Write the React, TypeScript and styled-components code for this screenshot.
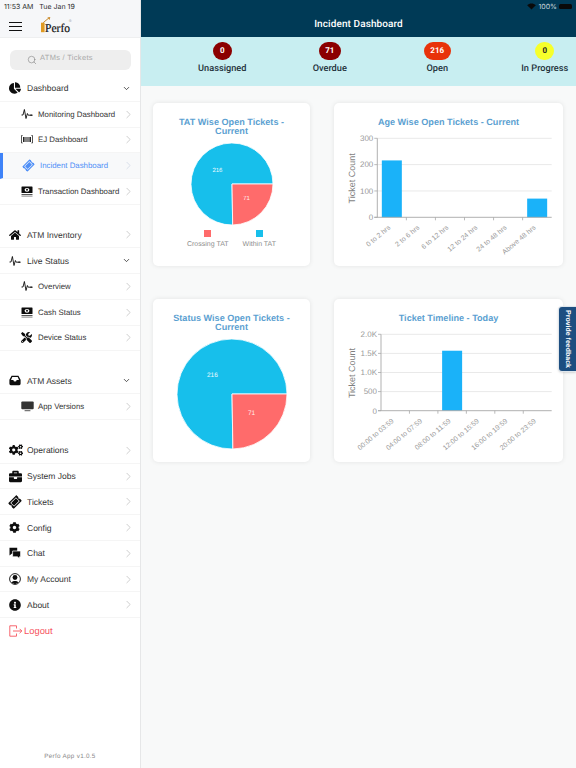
import React from 'react';
import styled, { createGlobalStyle } from 'styled-components';
import { ChevronRight, ChevronDown, Search } from 'lucide-react';
import { FaChartPie, FaHome, FaTools, FaCogs, FaBriefcase, FaTicketAlt, FaCog, FaInfoCircle } from 'react-icons/fa';

const Global = createGlobalStyle`
  html, body { margin: 0; padding: 0; background: #fff; }
  body { font-family: "Liberation Sans", Arial, sans-serif; text-rendering: geometricPrecision; }
  * { box-sizing: border-box; }
`;

const Shell = styled.div`
  position: relative;
  display: flex;
  width: 576px;
  height: 768px;
  overflow: hidden;
`;
const Sidebar = styled.aside`
  width: 141px;
  height: 768px;
  flex: none;
  display: flex;
  flex-direction: column;
  background: #fff;
  border-right: 1px solid #e6e7e8;
`;
const SideHeader = styled.header`
  height: 38px;
  flex: none;
  background: #f6f7f9;
  border-bottom: 1px solid #eeeff0;
  padding: 2px 0 0 4px;
`;
const Clock = styled.div`
  font-family: Inter, sans-serif;
  font-size: 7px;
  line-height: 9px;
  color: #2a2a2a;
  white-space: pre;
`;
const Brand = styled.div`
  display: flex;
  align-items: flex-start;
  margin: 4px 0 0 5px;
`;
const Burger = styled.div`
  width: 13px;
  margin-top: 7px;
  display: flex;
  flex-direction: column;
  gap: 2.6px;
  & > i { display: block; height: 1.2px; background: #111; }
`;
const LogoBox = styled.svg`
  display: block;
  margin-left: 18.5px;
  flex: none;
`;
const SearchBox = styled.div`
  height: 20px;
  margin: 12px 10px 6px 10px;
  padding: 0 0 0 17px;
  width: 121px;
  display: flex;
  align-items: center;
  gap: 3px;
  border-radius: 6px;
  background: #eeeeee;
  color: #a9a9a9;
  font-size: 7.5px;
  letter-spacing: 0.3px;
  & > span { margin-top: -5px; }
  & > svg { color: #777; }
`;
const Section = styled.nav<{ $gap?: number }>`
  margin-top: ${p => p.$gap ?? 0}px;
`;
const Row = styled.div<{ $sub?: boolean; $active?: boolean; $danger?: boolean }>`
  height: 25.75px;
  display: flex;
  align-items: center;
  padding-left: ${p => (p.$sub ? 21 : 9)}px;
  padding-right: 5px;
  border-bottom: 1px solid ${p => (p.$danger ? 'transparent' : '#f5f5f5')};
  border-left: ${p => (p.$active ? '3px solid #3f83f8' : '0 solid transparent')};
  background: ${p => (p.$active ? '#f8f9fa' : 'transparent')};
  color: ${p => (p.$active ? '#4f8ff7' : p.$danger ? '#f6555f' : '#333')};
  font-size: ${p => (p.$sub ? 7.85 : 8.5)}px;
`;
const IconSlot = styled.span<{ $sub?: boolean; $active?: boolean; $danger?: boolean }>`
  width: ${p => (p.$sub ? 17 : 18)}px;
  margin-left: ${p => (p.$active ? -1 : 0)}px;
  flex: none;
  display: flex;
  align-items: center;
  color: ${p => (p.$active ? '#4f8ff7' : p.$danger ? '#f6555f' : '#0d0d0d')};
`;
const Label = styled.span<{ $danger?: boolean }>`
  flex: 1;
  white-space: nowrap;
  ${p => (p.$danger ? 'font-size: 9.4px; margin-left: -3px;' : '')}
`;
const Chevron = styled.span<{ $faint?: boolean; $down?: boolean }>`
  display: flex;
  margin-right: ${p => (p.$down ? 4 : 0)}px;
  color: ${p => (p.$down ? '#222' : p.$faint ? '#c9d2e2' : '#b5b5b5')};
`;
const Version = styled.footer`
  margin-top: auto;
  padding-bottom: 7px;
  text-align: center;
  font-size: 6.3px;
  line-height: 9px;
  letter-spacing: 0.3px;
  color: #8a8a8a;
`;
const Main = styled.main`
  width: 435px;
  flex: none;
  overflow: hidden;
  display: flex;
  flex-direction: column;
  background: #f8f9f9;
`;
const TopBar = styled.header`
  height: 37px;
  flex: none;
  background: #003a56;
  color: #fff;
  padding-top: 2px;
`;
const DeviceStatus = styled.div`
  height: 9px;
  display: flex;
  justify-content: flex-end;
  align-items: center;
  gap: 2px;
  padding-right: 4px;
  font-family: Inter, sans-serif;
  font-size: 7px;
  color: #c9d5dc;
`;
const Battery = styled.span`
  width: 13px;
  height: 5.5px;
  border-radius: 1.5px;
  background: #0a0a0a;
`;
const PageTitle = styled.h1`
  margin: 7px 0 0;
  text-align: center;
  font-family: Roboto, sans-serif;
  font-size: 10px;
  line-height: 13px;
  font-weight: 500;
  letter-spacing: 0.1px;
`;
const StatBand = styled.section`
  height: 49px;
  flex: none;
  display: grid;
  grid-template-columns: repeat(4, 107.5px);
  padding: 4.5px 0 0 27.5px;
  background: #c8eef1;
`;
const Stat = styled.div`
  display: flex;
  flex-direction: column;
  align-items: center;
  gap: 2.5px;
  font-family: Roboto, sans-serif;
  font-size: 9.2px;
  line-height: 12px;
  font-weight: 500;
  color: #23313a;
  white-space: nowrap;
`;
const Badge = styled.span<{ $bg: string; $fg: string }>`
  min-width: 19px;
  height: 18.5px;
  padding: 0 6.5px;
  border-radius: 10px;
  display: flex;
  align-items: center;
  justify-content: center;
  background: ${p => p.$bg};
  color: ${p => p.$fg};
  font-size: 8px;
  font-weight: 700;
`;
const Board = styled.div`
  display: grid;
  grid-template-columns: 157px 229px;
  grid-auto-rows: 163px;
  column-gap: 24px;
  row-gap: 33px;
  padding: 17px 0 0 12px;
`;
const Card = styled.article`
  background: #fff;
  border-radius: 5px;
  box-shadow: 0 0 5px rgba(0, 0, 0, 0.09);
  padding-top: 14.5px;
  display: flex;
  flex-direction: column;
  align-items: center;
`;
const CardTitle = styled.h2`
  margin: 0;
  padding: 0 18px;
  width: 100%;
  text-align: center;
  font-size: 9.1px;
  line-height: 9.2px;
  font-weight: 700;
  color: #5b9fd1;
`;
const PieSvg = styled.svg`
  display: block;
  margin-top: 6.5px;
  flex: none;
`;
const Legend = styled.div`
  display: flex;
  gap: 14px;
  margin-top: 4px;
`;
const LegendItem = styled.div`
  display: flex;
  flex-direction: column;
  align-items: center;
  gap: 3px;
  font-size: 7px;
  line-height: 9px;
  color: #8d8d8d;
  white-space: nowrap;
`;
const Swatch = styled.i<{ $c: string }>`
  display: block;
  width: 7px;
  height: 7px;
  background: ${p => p.$c};
`;
const BarSvg = styled.svg`
  display: block;
  flex: none;
  align-self: flex-start;
`;
const FeedbackTab = styled.aside`
  position: absolute;
  right: 0;
  top: 307px;
  width: 17px;
  height: 64px;
  display: flex;
  align-items: center;
  justify-content: center;
  writing-mode: vertical-rl;
  background: #1d4e80;
  color: #fff;
  font-size: 7px;
  font-weight: 700;
  border-radius: 3px 0 0 3px;
  box-shadow: 0 0 0 1px #dfe6ec, 0 1px 3px rgba(0, 0, 0, 0.3);
`;

const Pulse = ({ s = 12 }: { s?: number }) => (
  <svg width={s} height={s} viewBox="0 0 12 12" fill="none" stroke="currentColor" strokeWidth="0.9" strokeLinejoin="round">
    <path d="M0.5 7 H2 L3.4 1.5 L5 10.5 L6.4 5.5 L7.2 7.2 H9" />
    <circle cx="10" cy="7.2" r="0.9" fill="currentColor" stroke="none" />
    <path d="M10.5 7.2 H11.7" />
  </svg>
);
const Ej = () => (
  <svg width="12" height="9" viewBox="0 0 12 9" fill="none" stroke="currentColor" strokeWidth="0.7">
    <path d="M1.6 0.5 H0.5 V8 H1.6 M10.4 0.5 H11.5 V8 H10.4" />
    <path d="M2.6 2 V7 M4 2 V7 M6 2 V7 M8 2 V7 M9.4 2 V7" strokeWidth="1" />
  </svg>
);
const Money = () => (
  <svg width="12" height="11" viewBox="0 0 12 11">
    <rect x="0.5" y="0.5" width="11" height="6.6" rx="0.6" fill="currentColor" />
    <ellipse cx="6" cy="3.8" rx="2.4" ry="1.9" fill="#fff" />
    <circle cx="6" cy="3.8" r="1" fill="currentColor" />
    <rect x="0.5" y="8" width="11" height="1" fill="currentColor" opacity="0.7" />
    <rect x="0.5" y="9.6" width="11" height="1" fill="currentColor" opacity="0.5" />
  </svg>
);
const Inbox = () => (
  <svg width="12" height="11" viewBox="0 0 12 11">
    <path d="M2.6 0.8 H9.4 L11.6 4.8 V8.8 A1.4 1.4 0 0 1 10.2 10.2 H1.8 A1.4 1.4 0 0 1 0.4 8.8 V4.8 Z" fill="currentColor" />
    <path d="M3.3 2 H8.7 L10 5 H7.6 A1.6 1.6 0 0 1 4.4 5 H2 Z" fill="#fff" />
  </svg>
);
const Monitor = () => (
  <svg width="13" height="11" viewBox="0 0 13 11">
    <rect x="0.3" y="0.6" width="12.4" height="7.6" rx="1" fill="#333" />
    <rect x="3.5" y="9" width="6" height="1.2" rx="0.5" fill="#777" />
  </svg>
);
const Chat = () => (
  <svg width="12" height="12" viewBox="0 0 12 12">
    <path d="M0.5 0.8 H8.2 V6.6 H3 L0.5 8.6 Z" fill="currentColor" />
    <path d="M3.6 4 H11.6 V9.8 H10.4 V11.6 L8.4 9.8 H3.6 Z" fill="currentColor" stroke="#fff" strokeWidth="0.7" />
  </svg>
);
const Account = () => (
  <svg width="12" height="12" viewBox="0 0 12 12">
    <circle cx="6" cy="6" r="5.4" fill="none" stroke="currentColor" strokeWidth="0.9" />
    <circle cx="6" cy="4.5" r="2.4" fill="currentColor" />
    <path d="M2.4 9.6 C3 7.4 9 7.4 9.6 9.6 L6 11.2 Z" fill="currentColor" />
  </svg>
);
const Logout = () => (
  <svg width="14" height="12" viewBox="0 0 14 12" fill="none" stroke="currentColor" strokeWidth="0.9" strokeLinejoin="round">
    <path d="M7.5 3.5 V0.8 H0.8 V11.2 H7.5 V8.5" />
    <path d="M4 6 H12.8 M10.6 3.8 L12.8 6 L10.6 8.2" />
  </svg>
);
const TicketGlyph = styled(FaTicketAlt)`
  transform: rotate(-45deg);
`;

type Item = { label: string; icon: React.ReactNode; sub?: boolean; open?: boolean; active?: boolean };

const groupA: Item[] = [
  { label: 'Dashboard', icon: <FaChartPie size={12} />, open: true },
  { label: 'Monitoring Dashboard', icon: <Pulse />, sub: true },
  { label: 'EJ Dashboard', icon: <Ej />, sub: true },
  { label: 'Incident Dashboard', icon: <TicketGlyph size={11} />, sub: true, active: true },
  { label: 'Transaction Dashboard', icon: <Money />, sub: true },
];
const groupB: Item[] = [
  { label: 'ATM Inventory', icon: <FaHome size={12} /> },
  { label: 'Live Status', icon: <Pulse />, open: true },
  { label: 'Overview', icon: <Pulse />, sub: true },
  { label: 'Cash Status', icon: <Money />, sub: true },
  { label: 'Device Status', icon: <FaTools size={11} />, sub: true },
];
const groupC: Item[] = [
  { label: 'ATM Assets', icon: <Inbox />, open: true },
  { label: 'App Versions', icon: <Monitor />, sub: true },
];
const groupD: Item[] = [
  { label: 'Operations', icon: <FaCogs size={14} /> },
  { label: 'System Jobs', icon: <FaBriefcase size={13} /> },
  { label: 'Tickets', icon: <TicketGlyph size={12} /> },
  { label: 'Config', icon: <FaCog size={11} /> },
  { label: 'Chat', icon: <Chat /> },
  { label: 'My Account', icon: <Account /> },
  { label: 'About', icon: <FaInfoCircle size={12} /> },
];

const NavRow = ({ label, icon, sub, open, active }: Item) => (
  <Row $sub={sub} $active={active}>
    <IconSlot $sub={sub} $active={active}>{icon}</IconSlot>
    <Label>{label}</Label>
    {open ? (
      <Chevron $down><ChevronDown size={9} strokeWidth={2} /></Chevron>
    ) : (
      <Chevron $faint={active}><ChevronRight size={13} strokeWidth={1.2} /></Chevron>
    )}
  </Row>
);

const PIE_BLUE = '#17bfeb';
const PIE_RED = '#ff6b6b';

const Pie = ({ r, font }: { r: number; font: number }) => {
  const c = r + 1;
  const total = 287;
  const redAngle = (71 / total) * Math.PI * 2;
  const ex = c + r * Math.cos(redAngle);
  const ey = c + r * Math.sin(redAngle);
  const lab = (a: number) => [c + r * 0.5 * Math.cos(a), c + r * 0.5 * Math.sin(a) + font / 3];
  const [rx, ry] = lab(redAngle / 2);
  const [bx, by] = lab(redAngle + (Math.PI * 2 - redAngle) / 2);
  return (
    <PieSvg width={c * 2} height={c * 2} viewBox={`0 0 ${c * 2} ${c * 2}`}>
      <path d={`M${c} ${c} L${ex} ${ey} A${r} ${r} 0 1 1 ${c + r} ${c} Z`} fill={PIE_BLUE} stroke="#fff" strokeWidth="0.8" />
      <path d={`M${c} ${c} L${c + r} ${c} A${r} ${r} 0 0 1 ${ex} ${ey} Z`} fill={PIE_RED} stroke="#fff" strokeWidth="0.8" />
      <text x={bx} y={by} textAnchor="middle" fontSize={font} fill="#eafaff">216</text>
      <text x={rx} y={ry} textAnchor="middle" fontSize={font} fill="#ffecec">71</text>
    </PieSvg>
  );
};

type BarProps = {
  x0: number; x1: number; top: number; bottom: number; max: number;
  yTicks: { v: number; t: string }[]; cats: string[]; values: number[];
};
const BarChart = ({ x0, x1, top, bottom, max, yTicks, cats, values }: BarProps) => {
  const w = (x1 - x0) / cats.length;
  const y = (v: number) => bottom - ((bottom - top) * v) / max;
  return (
    <BarSvg width={229} height={135} viewBox="0 0 229 135">
      {yTicks.map(k => (
        <g key={k.t}>
          {k.v > 0 && <line x1={x0} x2={x1} y1={y(k.v)} y2={y(k.v)} stroke="#e9e9e9" strokeWidth="1" />}
          <line x1={x0 - 3} x2={x0} y1={y(k.v)} y2={y(k.v)} stroke="#aaa" strokeWidth="0.8" />
          <text x={x0 - 4} y={y(k.v) + 2.8} textAnchor="end" fontSize="8" fill="#9a9a9a">{k.t}</text>
        </g>
      ))}
      <text transform={`translate(21 ${(top + bottom) / 2 + 0.5}) rotate(-90)`} textAnchor="middle" fontSize="9" fill="#7f7f7f">Ticket Count</text>
      {values.map((v, i) => v > 0 && (
        <rect key={i} x={x0 + w * i + (w - 20) / 2} y={y(v)} width={20} height={bottom - y(v)} fill="#1ab2f9" />
      ))}
      <line x1={x0} x2={x0} y1={top} y2={bottom} stroke="#a8a8a8" strokeWidth="0.9" />
      <line x1={x0 - 3} x2={x1} y1={bottom} y2={bottom} stroke="#a8a8a8" strokeWidth="0.9" />
      {cats.map((c, i) => {
        const cx = x0 + w * (i + 0.5) - 1;
        return (
          <g key={c}>
            {i > 0 && <line x1={x0 + w * i} x2={x0 + w * i} y1={bottom} y2={bottom + 3} stroke="#a8a8a8" strokeWidth="0.8" />}
            <text transform={`translate(${cx} ${bottom + 11}) rotate(-40)`} textAnchor="end" fontSize="7" fill="#9a9a9a">{c}</text>
          </g>
        );
      })}
    </BarSvg>
  );
};

export default function App() {
  return (
    <Shell>
      <Global />
      <Sidebar>
        <SideHeader>
          <Clock>{'11:53 AM   Tue Jan 19'}</Clock>
          <Brand>
            <Burger><i /><i /><i /></Burger>
            <LogoBox width="34" height="20" viewBox="0 0 34 20">
              <rect x="0" y="7.7" width="3.6" height="9.5" fill="#e09a22" />
              <path d="M2.2 7.7 L7.8 3" stroke="#c98a2a" strokeWidth="1" fill="none" />
              <path d="M6.4 2.6 L9.3 2 L8.6 4.9 Z" fill="#c98a2a" />
              <text x="4" y="17.2" fontFamily="Liberation Serif, serif" fontSize="12" textLength="25" lengthAdjust="spacingAndGlyphs" stroke="#111" strokeWidth="0.2" fill="#111">Perfo</text>
              <text x="27.8" y="7" fontSize="4" fill="#999">®</text>
            </LogoBox>
          </Brand>
        </SideHeader>
        <SearchBox>
          <Search size={10} strokeWidth={1.3} />
          <span>ATMs / Tickets</span>
        </SearchBox>
        <Section>{groupA.map(i => <NavRow key={i.label} {...i} />)}</Section>
        <Section $gap={17.8}>{groupB.map(i => <NavRow key={i.label} {...i} />)}</Section>
        <Section $gap={17.2}>{groupC.map(i => <NavRow key={i.label} {...i} />)}</Section>
        <Section $gap={18}>
          {groupD.map(i => <NavRow key={i.label} {...i} />)}
          <Row $danger>
            <IconSlot $danger><Logout /></IconSlot>
            <Label $danger>Logout</Label>
          </Row>
        </Section>
        <Version>Perfo App v1.0.5</Version>
      </Sidebar>
      <Main>
        <TopBar>
          <DeviceStatus>
            <svg width="9" height="7" viewBox="0 0 9 7">
              <path d="M4.5 6.6 L0.2 2.2 C2.6 -0.1 6.4 -0.1 8.8 2.2 Z" fill="#0a0a0a" />
            </svg>
            <span>100%</span>
            <Battery />
          </DeviceStatus>
          <PageTitle>Incident Dashboard</PageTitle>
        </TopBar>
        <StatBand>
          <Stat><Badge $bg="#8b0000" $fg="#fff">0</Badge>Unassigned</Stat>
          <Stat><Badge $bg="#8b0000" $fg="#fff">71</Badge>Overdue</Stat>
          <Stat><Badge $bg="#e8320a" $fg="#fff">216</Badge>Open</Stat>
          <Stat><Badge $bg="#f6ff2b" $fg="#222">0</Badge>In Progress</Stat>
        </StatBand>
        <Board>
          <Card>
            <CardTitle>TAT Wise Open Tickets - Current</CardTitle>
            <Pie r={41} font={6} />
            <Legend>
              <LegendItem><Swatch $c={PIE_RED} />Crossing TAT</LegendItem>
              <LegendItem><Swatch $c={PIE_BLUE} />Within TAT</LegendItem>
            </Legend>
          </Card>
          <Card>
            <CardTitle>Age Wise Open Tickets - Current</CardTitle>
            <BarChart
              x0={43.3} x1={217.7} top={11.3} bottom={90.3} max={300}
              yTicks={[{ v: 300, t: '300' }, { v: 200, t: '200' }, { v: 100, t: '100' }, { v: 0, t: '0' }]}
              cats={['0 to 2 hrs', '2 to 6 hrs', '6 to 12 hrs', '12 to 24 hrs', '24 to 48 hrs', 'Above 48 hrs']}
              values={[216, 0, 0, 0, 0, 71]}
            />
          </Card>
          <Card>
            <CardTitle>Status Wise Open Tickets - Current</CardTitle>
            <Pie r={55} font={6.5} />
          </Card>
          <Card>
            <CardTitle>Ticket Timeline - Today</CardTitle>
            <BarChart
              x0={47} x1={217.7} top={11.3} bottom={87.7} max={2000}
              yTicks={[{ v: 2000, t: '2.0K' }, { v: 1500, t: '1.5K' }, { v: 1000, t: '1.0K' }, { v: 500, t: '500' }, { v: 0, t: '0' }]}
              cats={['00:00 to 03:59', '04:00 to 07:59', '08:00 to 11:59', '12:00 to 15:59', '16:00 to 19:59', '20:00 to 23:59']}
              values={[0, 0, 1570, 0, 0, 0]}
            />
          </Card>
        </Board>
      </Main>
      <FeedbackTab>Provide feedback</FeedbackTab>
    </Shell>
  );
}
